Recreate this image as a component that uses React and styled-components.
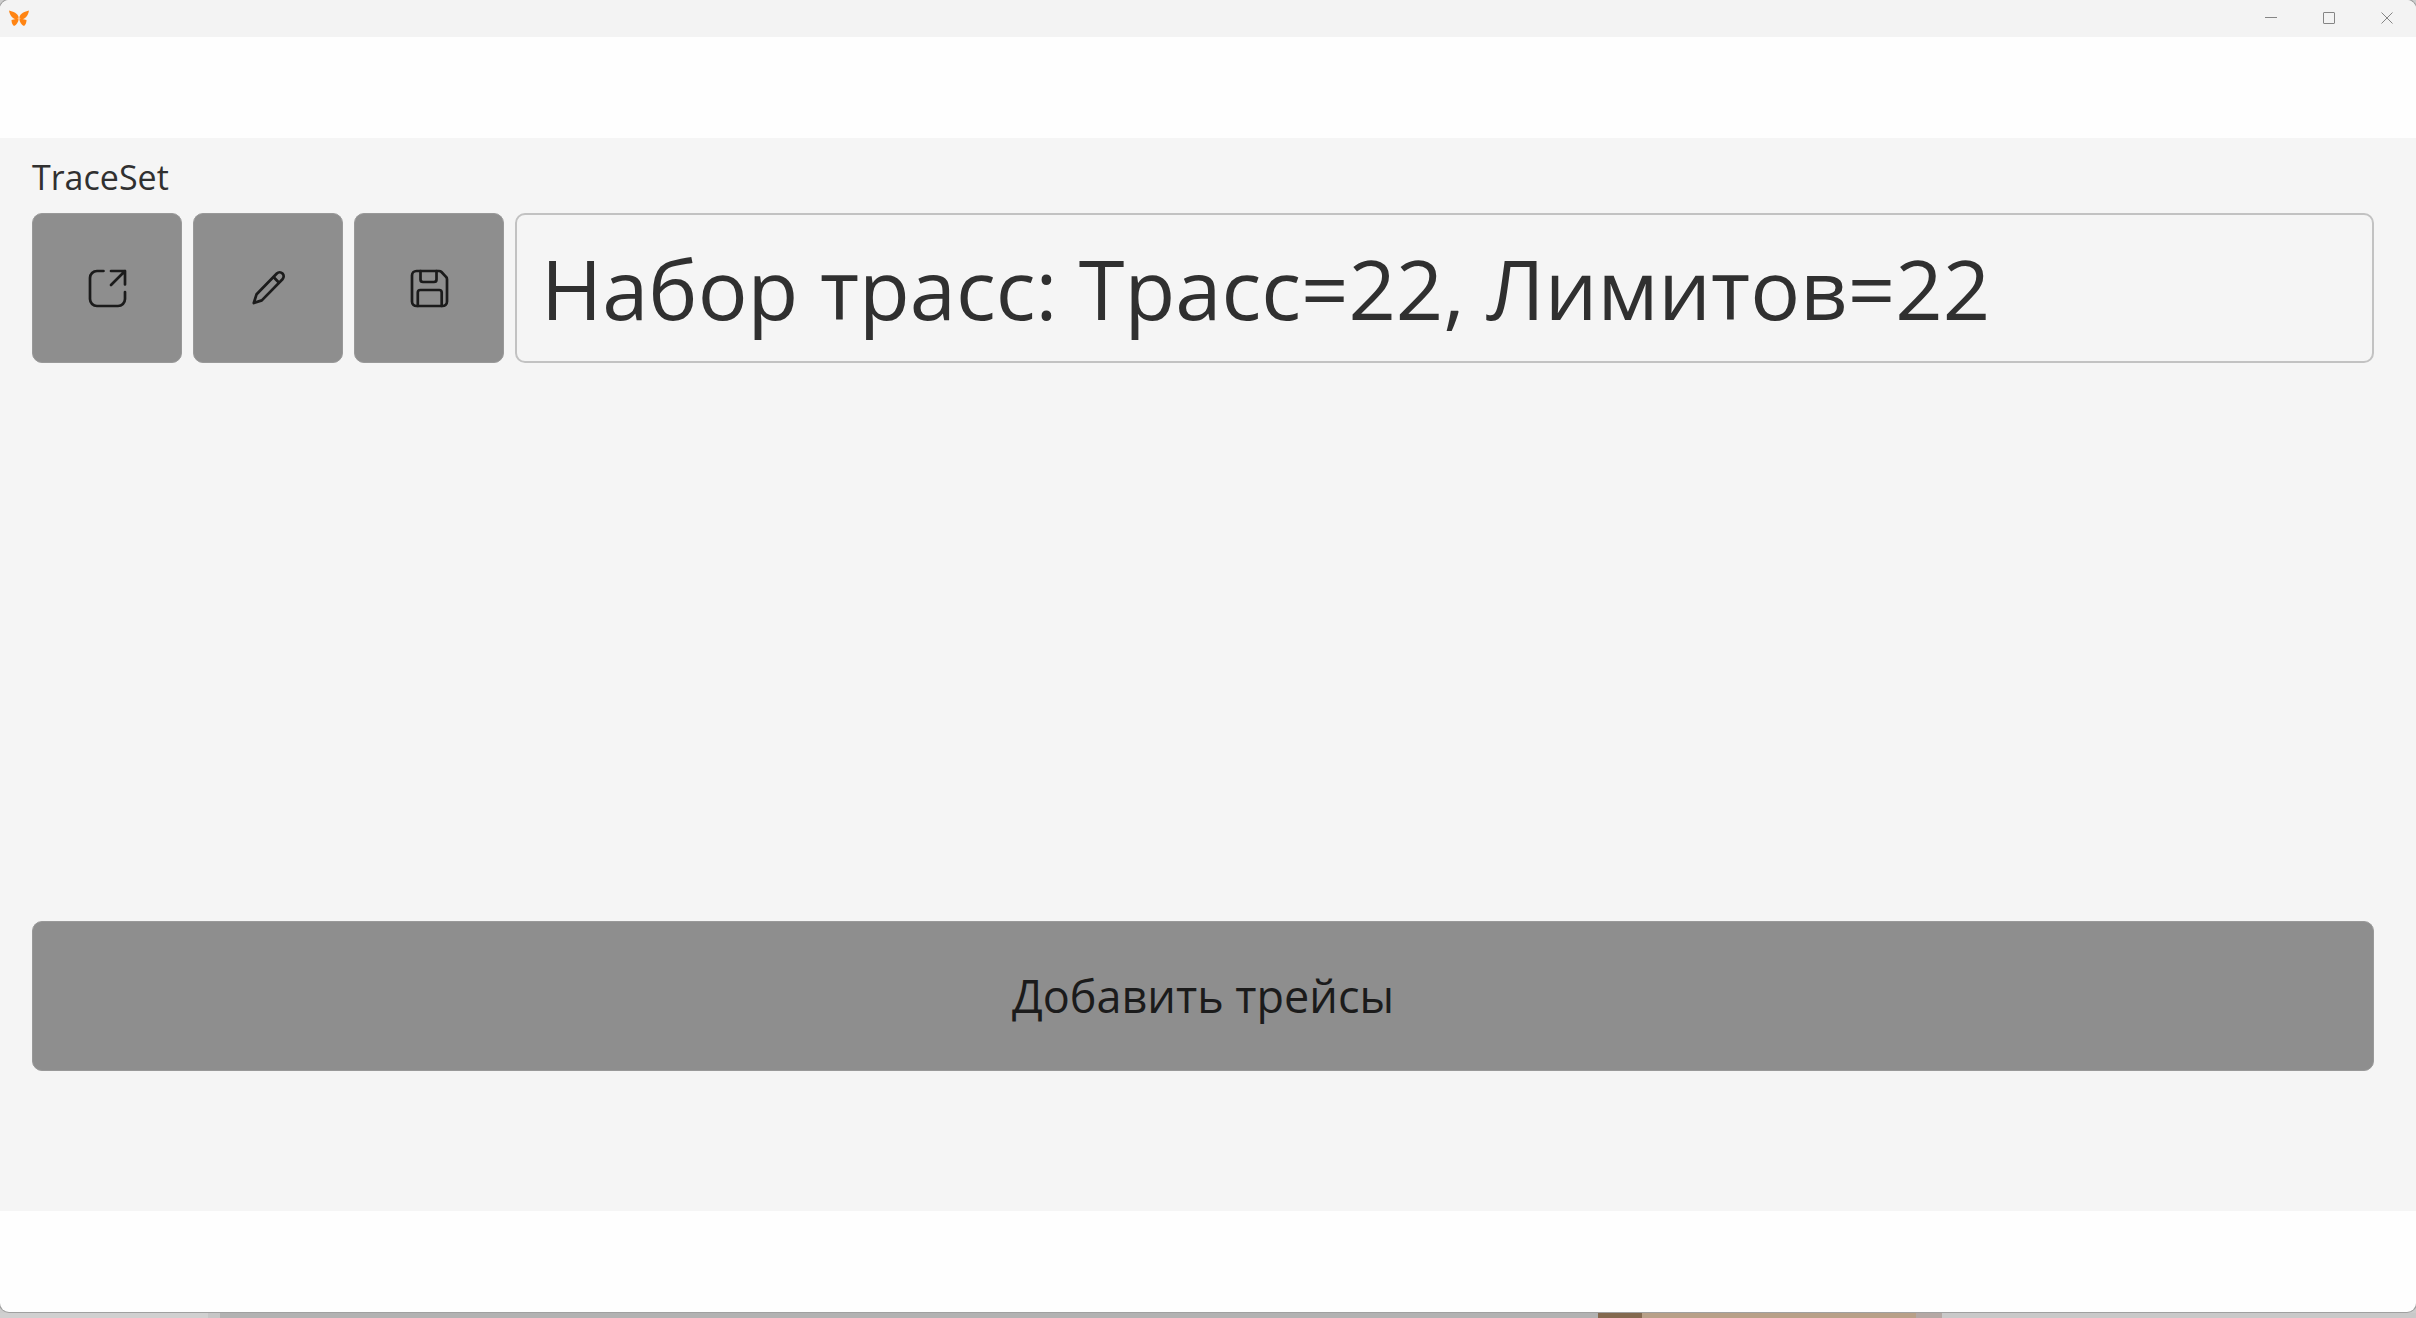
import React from "react";
import styled, { createGlobalStyle } from "styled-components";

const GlobalStyle = createGlobalStyle`
  * { box-sizing: border-box; }
  body {
    margin: 0;
    background: #cdcdcd;
    font-family: "Open Sans", "Noto Sans", sans-serif;
  }
`;

const Desktop = styled.div`
  display: flex;
  flex-direction: column;
  min-height: 100vh;
`;

const Window = styled.div`
  flex: 1;
  display: flex;
  flex-direction: column;
  overflow: hidden;
  border-radius: 9px;
  background: #fefefe;
  box-shadow: 0 0 0 1px #a0a0a0;
`;

const TitleBar = styled.header`
  display: flex;
  justify-content: space-between;
  height: 37px;
  padding-left: 9px;
  background: #f3f3f3;
`;

const Caption = styled.div`
  display: flex;
`;

const CaptionButton = styled.button`
  display: grid;
  place-items: center;
  width: 58px;
  height: 36px;
  padding: 0;
  border: 0;
  background: transparent;
  color: #858585;
`;

const Band = styled.div`
  height: 101px;
`;

const Main = styled.main`
  flex: 1;
  display: flex;
  flex-direction: column;
  justify-content: space-between;
  padding: 13px 42px 140px 32px;
  background: #f5f5f5;
`;

const Label = styled.label`
  display: block;
  margin-bottom: 10px;
  color: #303030;
  font-size: 34px;
  line-height: 52px;
`;

const Row = styled.div`
  display: flex;
  gap: 11px;
`;

const FilledButton = styled.button`
  display: grid;
  place-items: center;
  flex: none;
  width: ${(p) => (p.$wide ? "100%" : "150px")};
  height: 150px;
  padding: 0;
  border: 1px solid #999999;
  border-radius: 10px;
  background: #8e8e8e;
  color: #1b1b1b;
  font: inherit;
  font-size: 45px;
  line-height: 64px;
`;

const Field = styled.input`
  flex: 1;
  min-width: 0;
  height: 150px;
  padding: 0 24px 2px;
  border: 2px solid #c2c2c2;
  border-radius: 10px;
  outline: 0;
  background: #f5f5f5;
  color: #303030;
  font: inherit;
  font-size: 83px;
`;

const Backdrop = styled.div`
  display: flex;
  height: 5px;
  margin-top: 1px;
`;

const Patch = styled.div`
  flex: ${(p) => p.$size} 1 0;
  background: ${(p) => p.$color};
`;

const patches = [
  [208, "#d0d0d0"],
  [12, "#c6c6c6"],
  [1378, "#b2b2b2"],
  [44, "#83694f"],
  [274, "#b8a088"],
  [26, "#b4a8a4"],
  [474, "#c9c9c9"],
];

const Icon = ({ children }) => (
  <svg
    width="48"
    height="48"
    viewBox="0 0 48 48"
    fill="none"
    stroke="currentColor"
    strokeWidth="2.7"
    strokeLinecap="round"
    strokeLinejoin="round"
    aria-hidden="true"
  >
    {children}
  </svg>
);

const CaptionIcon = ({ children }) => (
  <svg width="12" height="12" viewBox="0 0 12 12" fill="none" stroke="currentColor" aria-hidden="true">
    {children}
  </svg>
);

const LogoSvg = styled.svg`
  align-self: center;
`;

const Logo = () => (
  <LogoSvg width="20" height="17" viewBox="0 0 20 17" aria-hidden="true">
    <g fill="#ff8412">
      <path d="M0 0.500C4 1.500 9 3 9.800 8L8 9.500C4 9 1 6 0 0.500Z" />
      <path d="M20 0.500C16 1.500 11 3 10.200 8L12 9.500C16 9 19 6 20 0.500Z" />
      <path d="M8.800 8.500L2.500 10C2.500 13 3.500 15 5 16C7.500 15 9.300 12 9.800 9Z" />
      <path d="M11.200 8.500L17.500 10C17.500 13 16.500 15 15 16C12.500 15 10.700 12 10.200 9Z" />
    </g>
    <circle cx="10" cy="8.500" r="1.300" fill="#ffc38a" />
  </LogoSvg>
);

export default function App() {
  return (
    <Desktop>
      <GlobalStyle />
      <Window>
        <TitleBar>
          <Logo />
          <Caption>
            <CaptionButton aria-label="Свернуть">
              <CaptionIcon><path d="M0 5.500H12" /></CaptionIcon>
            </CaptionButton>
            <CaptionButton aria-label="Развернуть">
              <CaptionIcon><rect x="0.500" y="0.500" width="11" height="11" rx="0.500" /></CaptionIcon>
            </CaptionButton>
            <CaptionButton aria-label="Закрыть">
              <CaptionIcon><path d="M0.500 0.500L11.500 11.500M11.500 0.500L0.500 11.500" /></CaptionIcon>
            </CaptionButton>
          </Caption>
        </TitleBar>
        <Band />
        <Main>
          <div>
            <Label htmlFor="trace-set">TraceSet</Label>
            <Row>
              <FilledButton aria-label="Открыть">
                <Icon>
                  <path d="M20.500 7H14a7 7 0 0 0-7 7v21a7 7 0 0 0 7 7h21a7 7 0 0 0 7-7v-7" />
                  <path d="M28 7H42V20.500M42 7L28 21" />
                </Icon>
              </FilledButton>
              <FilledButton aria-label="Изменить">
                <Icon>
                  <path d="M32.800 9.500A4 4 0 0 1 38.500 15.200L17.800 36.400L9.800 39L12.600 30.200Z" />
                  <path d="M30 13.500L34.800 18.500" />
                </Icon>
              </FilledButton>
              <FilledButton aria-label="Сохранить">
                <Icon>
                  <path d="M11.500 7H34Q35.500 7 36.500 8L41 12.800Q42 13.800 42 15.300V37.500A4.500 4.500 0 0 1 37.500 42H11.500A4.500 4.500 0 0 1 7 37.500V11.500A4.500 4.500 0 0 1 11.500 7Z" />
                  <path d="M15.500 7V15.500A2.500 2.500 0 0 0 18 18H29A2.500 2.500 0 0 0 31.500 15.500V7" />
                  <path d="M12.800 42V28.500A2.500 2.500 0 0 1 15.300 26H34.200A2.500 2.500 0 0 1 36.700 28.500V42" />
                </Icon>
              </FilledButton>
              <Field id="trace-set" type="text" defaultValue="Набор трасс: Трасс=22, Лимитов=22" />
            </Row>
          </div>
          <FilledButton $wide>Добавить трейсы</FilledButton>
        </Main>
        <Band />
      </Window>
      <Backdrop>
        {patches.map(([size, color], i) => (
          <Patch key={i} $size={size} $color={color} />
        ))}
      </Backdrop>
    </Desktop>
  );
}
